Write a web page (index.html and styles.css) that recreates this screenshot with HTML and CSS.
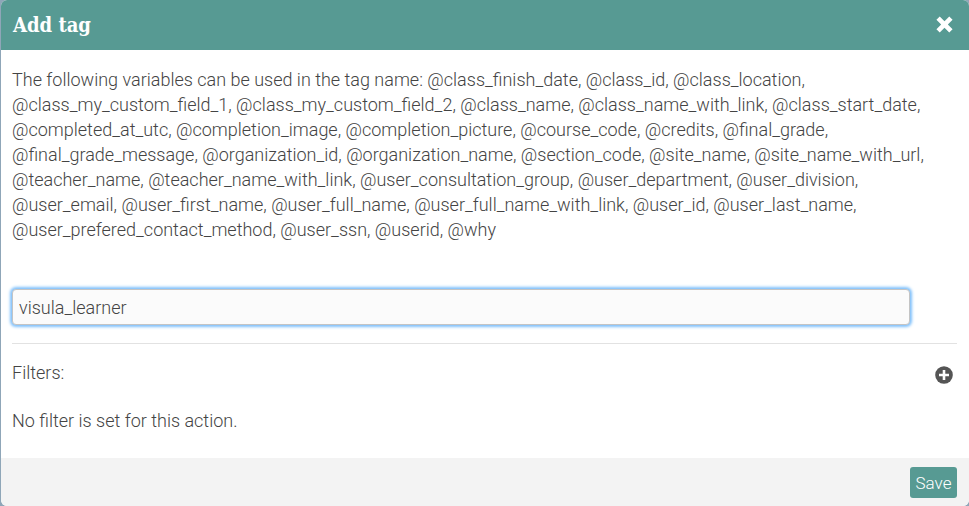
FILE: index.html
```html
<!DOCTYPE html>
<html lang="en">
<head>
<meta charset="utf-8">
<title>Add tag</title>
<link rel="stylesheet" href="styles.css">
</head>
<body>
<div class="modal">
  <header class="modal-header">
    <h1 class="modal-title">Add tag</h1>
    <svg class="close-icon" viewBox="0 0 16 16" aria-label="Close"><path d="M1.2 4 L4 1.2 L8 5.2 L12 1.2 L14.8 4 L10.8 8 L14.8 12 L12 14.8 L8 10.8 L4 14.8 L1.2 12 L5.2 8 Z"/></svg>
  </header>
  <main class="modal-body">
    <p class="variables">The following variables can be used in the tag name: @class_finish_date, @class_id, @class_location,<br>@class_my_custom_field_1, @class_my_custom_field_2, @class_name, @class_name_with_link, @class_start_date,<br>@completed_at_utc, @completion_image, @completion_picture, @course_code, @credits, @final_grade,<br>@final_grade_message, @organization_id, @organization_name, @section_code, @site_name, @site_name_with_url,<br>@teacher_name, @teacher_name_with_link, @user_consultation_group, @user_department, @user_division,<br>@user_email, @user_first_name, @user_full_name, @user_full_name_with_link, @user_id, @user_last_name,<br>@user_prefered_contact_method, @user_ssn, @userid, @why</p>
    <input class="tag-input" type="text" value="visula_learner">
    <hr class="divider">
    <div class="filters-row">
      <span>Filters:</span>
      <svg class="add-icon" viewBox="0 0 18 18" aria-label="Add filter"><circle cx="9" cy="9" r="8.8"/><path class="add-plus" d="M7.7 4 H10.3 V7.7 H14 V10.3 H10.3 V14 H7.7 V10.3 H4 V7.7 H7.7 Z"/></svg>
    </div>
    <p class="no-filter">No filter is set for this action.</p>
  </main>
  <footer class="modal-footer">
    <button class="save" type="button">Save</button>
  </footer>
</div>
</body>
</html>
```
FILE: styles.css
```css
html, body {
  margin: 0;
  height: 100%;
}
body {
  background: #8fa6b8;
  overflow: hidden;
  font-family: Roboto, "Liberation Sans", sans-serif;
  font-weight: 300;
  font-size: 18px;
  line-height: 25px;
  color: #444;
}
.modal {
  box-sizing: border-box;
  height: 506px;
  margin-left: 1px;
  background: #fff;
  border-radius: 6px;
  overflow: hidden;
  display: flex;
  flex-direction: column;
}
.modal-header {
  height: 50px;
  flex: none;
  background: #579a93;
  color: #fff;
  display: flex;
  align-items: center;
  justify-content: space-between;
  padding: 0 15px 0 12px;
}
.modal-title {
  margin: 0;
  padding-top: 1px;
  font-family: "DejaVu Serif Condensed", "DejaVu Serif", serif;
  font-size: 20px;
  font-weight: 700;
}
.close-icon {
  width: 19px;
  height: 19px;
  fill: #fff;
  margin-bottom: 1px;
}
.modal-body {
  flex: 1;
  padding: 0 12px 0 11px;
  display: flex;
  flex-direction: column;
}
.variables {
  margin: 17px 0 0;
}
.tag-input {
  box-sizing: border-box;
  width: 898px;
  height: 36px;
  margin-top: 47px;
  padding: 0 6px;
  border: 1px solid #c4c4c4;
  border-radius: 4px;
  background: #fbfbfb;
  box-shadow: 0 0 3px 2px #7fc0fb;
  font: 300 18px Roboto, sans-serif;
  color: #444;
  outline: none;
}
.divider {
  width: 100%;
  margin: 18px 0 0;
  border: 0;
  border-top: 1px solid #e2e2e2;
}
.filters-row {
  display: flex;
  align-items: center;
  justify-content: space-between;
  margin-top: 16px;
  height: 25px;
  padding-right: 4px;
}
.add-icon {
  width: 18px;
  height: 18px;
  fill: #555;
  margin-top: 5px;
}
.add-plus {
  fill: #fff;
}
.no-filter {
  margin: 23px 0 0;
}
.modal-footer {
  height: 48px;
  flex: none;
  background: #f3f3f3;
  display: flex;
  align-items: center;
  justify-content: flex-end;
  padding: 0 12px;
}
.save {
  width: 47px;
  height: 31px;
  margin-top: 1px;
  padding: 0;
  border: 0;
  border-radius: 3px;
  background: #579a93;
  color: #fff;
  font: 300 17px Roboto, sans-serif;
}
```
